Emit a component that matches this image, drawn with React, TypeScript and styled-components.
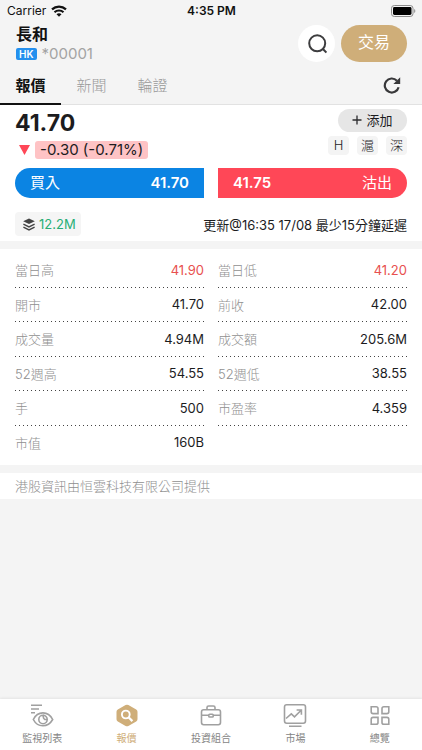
import React from "react";
import styled, { createGlobalStyle, css } from "styled-components";

const GlobalStyle = createGlobalStyle`
  *, *::before, *::after { box-sizing: border-box; }
  html, body, #root { height: 100%; }
  body {
    margin: 0;
    background: #f4f4f4;
    color: #1c1c1e;
    font-family: Inter, "Noto Sans CJK TC", sans-serif;
    font-size: 13px;
  }
  button { font: inherit; color: inherit; border: 0; padding: 0; background: none; cursor: pointer; }
  svg { display: block; flex: none; }
  h1, p, dl, dd { margin: 0; }
`;

const Screen = styled.div`
  display: flex;
  flex-direction: column;
  min-height: 100%;
`;

const StatusBar = styled.div`
  display: grid;
  grid-template-columns: 1fr auto 1fr;
  align-items: center;
  height: 21px;
  padding: 0 6px 0 7px;
  font-size: 12px;
  color: #111;
`;
const Carrier = styled.span`
  display: flex;
  align-items: center;
  gap: 5px;
`;
const Clock = styled.span`
  font-weight: 600;
`;
const BatterySlot = styled.span`
  justify-self: end;
`;

const Header = styled.header`
  display: flex;
  align-items: center;
  gap: 6px;
  height: 45px;
  padding: 0 15px 0 16px;
`;
const Company = styled.div`
  flex: 1;
  display: flex;
  flex-direction: column;
`;
const CompanyName = styled.h1`
  font-size: 16px;
  line-height: 20px;
  font-weight: 700;
  color: #111;
`;
const Ticker = styled.div`
  display: flex;
  align-items: center;
  gap: 5px;
  font-size: 15px;
  line-height: 20px;
  color: #a3a3a3;
`;
const Market = styled.span`
  padding: 0 3px;
  border-radius: 2px;
  background: #2490ee;
  color: #fff;
  font-size: 10px;
  line-height: 12px;
  font-weight: 600;
`;
const SearchButton = styled.button`
  display: grid;
  place-items: center;
  width: 37px;
  height: 37px;
  border-radius: 50%;
  background: #fff;
`;
const TradeButton = styled.button`
  width: 66px;
  height: 37px;
  border-radius: 19px;
  background: #cfae79;
  color: #fff;
  font-size: 16px;
  line-height: 20px;
  padding-bottom: 3px;
`;

const TabBar = styled.nav`
  display: flex;
  align-items: stretch;
  height: 39px;
  padding-right: 21px;
  border-bottom: 1px solid #e2e2e2;
`;
const Tab = styled.button<{ $active?: boolean }>`
  width: 61px;
  margin-bottom: -1px;
  font-size: 15px;
  font-weight: 300;
  color: #999;
  border-bottom: 2px solid transparent;
  ${(p) =>
    p.$active &&
    css`
      color: #111;
      font-weight: 700;
      border-color: #111;
    `}
`;
const RefreshButton = styled.button`
  margin-left: auto;
`;

const Panel = styled.section`
  background: #fff;
  padding: 0 15px;
`;
const QuotePanel = styled(Panel)`
  padding-top: 4px;
  padding-bottom: 5px;
`;
const QuoteTop = styled.div`
  display: flex;
  justify-content: space-between;
`;
const Price = styled.p`
  font-size: 23px;
  line-height: 28px;
  font-weight: 700;
`;
const Change = styled.div`
  display: flex;
  align-items: center;
  gap: 5px;
  margin-top: 4px;
  padding-left: 4px;
`;
const ChangeValue = styled.span`
  padding: 0 5px;
  border-radius: 3px;
  background: #fec3c5;
  font-size: 15px;
  line-height: 18px;
`;
const QuoteSide = styled.div`
  display: flex;
  flex-direction: column;
  align-items: flex-end;
  gap: 4px;
`;
const AddButton = styled.button`
  display: flex;
  align-items: center;
  justify-content: center;
  gap: 4px;
  width: 69px;
  height: 23px;
  border-radius: 12px;
  background: #e6e6e6;
  line-height: 18px;
  padding-bottom: 1px;
`;
const Badges = styled.div`
  display: flex;
  gap: 8px;
`;
const Badge = styled.span`
  width: 21px;
  border-radius: 4px;
  background: #f4f4f4;
  font-weight: 300;
  line-height: 19px;
  text-align: center;
`;
const OrderRow = styled.div`
  display: grid;
  grid-template-columns: 1fr 1fr;
  gap: 14px;
  margin-top: 9px;
`;
const OrderButton = styled.button<{ $side: "buy" | "sell" }>`
  display: flex;
  align-items: center;
  justify-content: space-between;
  height: 30px;
  padding: 0 15px;
  color: #fff;
  font-size: 15px;
  line-height: 20px;
  background: ${(p) => (p.$side === "buy" ? "#0b84e3" : "#ff4757")};
  border-radius: ${(p) => (p.$side === "buy" ? "15px 0 0 15px" : "0 15px 15px 0")};
`;
const OrderPrice = styled.span`
  font-weight: 600;
`;
const MetaRow = styled.div`
  display: flex;
  align-items: center;
  justify-content: space-between;
  margin-top: 14px;
`;
const Volume = styled.span`
  display: flex;
  align-items: center;
  gap: 4px;
  height: 24px;
  padding: 0 5px 0 8px;
  border-radius: 4px;
  background: #f5f5f5;
  color: #27ae75;
`;

const StatsPanel = styled(Panel)`
  display: grid;
  grid-template-columns: 1fr 1fr;
  gap: 14px;
  margin-top: 8px;
  padding-top: 4px;
  padding-bottom: 5px;
`;
const StatList = styled.dl`
  display: flex;
  flex-direction: column;
`;
const Stat = styled.div`
  display: flex;
  align-items: center;
  justify-content: space-between;
  height: 35px;
  padding-bottom: 2px;
  &:nth-child(even) { height: 34px; }
  &:not(:nth-child(6)) {
    background: repeating-linear-gradient(90deg, #444 0 1px, transparent 1px 4px) left bottom / 100% 1px no-repeat;
  }
`;
const StatLabel = styled.dt`
  color: #909090;
  font-weight: 300;
`;
const StatValue = styled.dd<{ $alert?: boolean }>`
  color: ${(p) => (p.$alert ? "#e8504f" : "#1c1c1e")};
`;
const Source = styled(Panel)`
  margin-top: 8px;
  color: #909090;
  font-weight: 300;
  line-height: 26px;
`;

const BottomNav = styled.nav`
  display: grid;
  grid-template-columns: repeat(5, 1fr);
  height: 51px;
  margin-top: auto;
  background: #fff;
  box-shadow: 0 -1px 2px #e4e4e4;
`;
const NavButton = styled.button<{ $active?: boolean }>`
  display: flex;
  flex-direction: column;
  align-items: center;
  padding-top: 4px;
  font-size: 10px;
  line-height: 14px;
  color: ${(p) => (p.$active ? "#cfae79" : "#858585")};
  svg { margin-bottom: 3px; color: ${(p) => (p.$active ? "#cfae79" : "#a0a0a0")}; }
`;

const WifiIcon = () => (
  <svg width="16" height="12" viewBox="0 0 16 12" fill="none" stroke="#111" strokeWidth="2.2">
    <path d="M1 4.4C5 .6 11 .6 15 4.4" />
    <path d="M3.5 7.2c2.5-2.3 6.500-2.3 9 0" />
    <path d="M5.500 9.200c1.400-1.200 3.600-1.200 5 0L8 11.700Z" fill="#111" stroke="none" />
  </svg>
);
const BatteryIcon = () => (
  <svg width="25" height="12" viewBox="0 0 25 12">
    <rect x=".5" y=".5" width="21.5" height="11" rx="2.8" fill="none" stroke="#8c8c8c" />
    <rect x="2" y="2" width="18.5" height="8" rx="1.4" fill="#000" />
    <path d="M23.2 4v4c1.5-.7 1.5-3.3 0-4Z" fill="#8c8c8c" />
  </svg>
);
const SearchIcon = () => (
  <svg width="20" height="20" viewBox="0 0 20 20" fill="none" stroke="#3d3d3f" strokeWidth="2">
    <circle cx="10.2" cy="9.3" r="8" />
    <path d="m15.7 14.8 3.7 3.7" />
  </svg>
);
const RefreshIcon = () => (
  <svg width="18" height="18" viewBox="0 0 18 18" fill="none" stroke="#38383a" strokeWidth="2.2">
    <path d="M15.6 11.200A7 7 0 1 1 13.900 4.700" />
    <path d="M17.200 1.200v6.800h-6.800Z" fill="#38383a" stroke="none" />
  </svg>
);
const DownIcon = () => (
  <svg width="11" height="10" viewBox="0 0 11 10">
    <path d="M0 0h11L5.5 10Z" fill="#ff4757" />
  </svg>
);
const PlusIcon = () => (
  <svg width="10" height="10" viewBox="0 0 10 10" stroke="#2c2c2e" strokeWidth="1.3">
    <path d="M5 .5v9M.5 5h9" />
  </svg>
);
const LayersIcon = () => (
  <svg width="12" height="13" viewBox="0 0 12 13" fill="none" stroke="#444" strokeWidth="1.4">
    <path d="M6 .5 11.8 3.3 6 6.1.2 3.3Z" fill="#444" stroke="none" />
    <path d="m.4 6.2 5.6 2.7 5.6-2.7M.4 9.2 6 11.9l5.6-2.7" />
  </svg>
);

const stroke = { fill: "none", stroke: "currentColor", strokeWidth: 1.6 };
const WatchIcon = () => (
  <svg width="24" height="25" viewBox="0 0 24 25" {...stroke}>
    <path d="M1 2.200h11M1 6h8M1 9.800h4" />
    <path d="M3.300 16.500c4.400-8.800 14.800-8.800 19.400 0-4.800 8.400-15 8.400-19.400 0Z" />
    <path d="M13 12.300a4.200 4.200 0 1 0 4.200 4.200h-2.400l-1.200-1.300Z" />
    <path d="M13 12.300a4.200 4.200 0 0 1 4.200 4.200" />
  </svg>
);
const QuoteIcon = () => (
  <svg width="24" height="25" viewBox="0 0 24 25">
    <path d="M10.6 2.1q1.4-.8 2.8 0l7.8 4.4q1.3.8 1.3 2.2v7.6q0 1.4-1.3 2.2l-7.8 4.4q-1.4.8-2.8 0l-7.8-4.4q-1.3-.8-1.3-2.2V8.700q0-1.400 1.300-2.200Z" fill="currentColor" />
    <circle cx="10.800" cy="11.500" r="3.900" fill="none" stroke="#fff" strokeWidth="1.900" />
    <path d="m13.800 14.500 3.600 3.600" stroke="#fff" strokeWidth="2.300" />
  </svg>
);
const CaseIcon = () => (
  <svg width="24" height="25" viewBox="0 0 24 25" {...stroke}>
    <rect x="2.500" y="6.700" width="19" height="15" rx="2.200" />
    <path d="M8 6.500V4.600Q8 3 9.600 3h4.800Q16 3 16 4.600v1.900M2.500 12.200h7.300m4.400 0h7.300" />
    <rect x="9.800" y="11.200" width="4.400" height="2.800" rx=".8" />
  </svg>
);
const MarketIcon = () => (
  <svg width="24" height="25" viewBox="0 0 24 25" {...stroke}>
    <rect x="1.500" y="1.800" width="21" height="18.500" rx="2.200" />
    <path d="m3 15.500 5.300-4.700 3.200 3 6.400-6.300M13.600 7h4.800v4.800M6 23.200h12.500" />
  </svg>
);
const OverviewIcon = () => (
  <svg width="24" height="25" viewBox="0 0 24 25" {...stroke}>
    <path d="M3.200 3.700h4.900q1.900 0 1.900 1.900v5H5.100q-1.900 0-1.900-1.900Z" />
    <path d="M20.800 3.700h-4.900q-1.900 0-1.900 1.900v5h4.900q1.900 0 1.900-1.900Z" />
    <path d="M3.200 21.300h4.900q1.900 0 1.900-1.900v-5H5.100q-1.900 0-1.900 1.900Z" />
    <path d="M20.800 21.300h-4.900q-1.900 0-1.900-1.900v-5h4.900q1.900 0 1.900 1.900Z" />
  </svg>
);

type StatItem = { label: string; value: string; alert?: boolean };
const leftStats: StatItem[] = [
  { label: "當日高", value: "41.90", alert: true },
  { label: "開市", value: "41.70" },
  { label: "成交量", value: "4.94M" },
  { label: "52週高", value: "54.55" },
  { label: "手", value: "500" },
  { label: "市值", value: "160B" },
];
const rightStats: StatItem[] = [
  { label: "當日低", value: "41.20", alert: true },
  { label: "前收", value: "42.00" },
  { label: "成交額", value: "205.6M" },
  { label: "52週低", value: "38.55" },
  { label: "市盈率", value: "4.359" },
];
const navItems = [
  { label: "監視列表", Icon: WatchIcon },
  { label: "報價", Icon: QuoteIcon, active: true },
  { label: "投資組合", Icon: CaseIcon },
  { label: "市場", Icon: MarketIcon },
  { label: "總覽", Icon: OverviewIcon },
];

const Stats = ({ items }: { items: StatItem[] }) => (
  <StatList>
    {items.map((s) => (
      <Stat key={s.label}>
        <StatLabel>{s.label}</StatLabel>
        <StatValue $alert={s.alert}>{s.value}</StatValue>
      </Stat>
    ))}
  </StatList>
);

export default function App() {
  return (
    <>
      <GlobalStyle />
      <Screen>
        <StatusBar>
          <Carrier>Carrier <WifiIcon /></Carrier>
          <Clock>4:35 PM</Clock>
          <BatterySlot><BatteryIcon /></BatterySlot>
        </StatusBar>
        <Header>
          <Company>
            <CompanyName>長和</CompanyName>
            <Ticker><Market>HK</Market>*00001</Ticker>
          </Company>
          <SearchButton aria-label="搜尋"><SearchIcon /></SearchButton>
          <TradeButton>交易</TradeButton>
        </Header>
        <TabBar>
          <Tab $active>報價</Tab>
          <Tab>新聞</Tab>
          <Tab>輪證</Tab>
          <RefreshButton aria-label="重新整理"><RefreshIcon /></RefreshButton>
        </TabBar>
        <main>
          <QuotePanel>
            <QuoteTop>
              <div>
                <Price>41.70</Price>
                <Change><DownIcon /><ChangeValue>-0.30 (-0.71%)</ChangeValue></Change>
              </div>
              <QuoteSide>
                <AddButton><PlusIcon />添加</AddButton>
                <Badges><Badge>H</Badge><Badge>滬</Badge><Badge>深</Badge></Badges>
              </QuoteSide>
            </QuoteTop>
            <OrderRow>
              <OrderButton $side="buy"><span>買入</span><OrderPrice>41.70</OrderPrice></OrderButton>
              <OrderButton $side="sell"><OrderPrice>41.75</OrderPrice><span>沽出</span></OrderButton>
            </OrderRow>
            <MetaRow>
              <Volume><LayersIcon />12.2M</Volume>
              <span>更新@16:35 17/08 最少15分鐘延遲</span>
            </MetaRow>
          </QuotePanel>
          <StatsPanel>
            <Stats items={leftStats} />
            <Stats items={rightStats} />
          </StatsPanel>
          <Source>港股資訊由恒雲科技有限公司提供</Source>
        </main>
        <BottomNav>
          {navItems.map(({ label, Icon, active }) => (
            <NavButton key={label} $active={active}><Icon />{label}</NavButton>
          ))}
        </BottomNav>
      </Screen>
    </>
  );
}
